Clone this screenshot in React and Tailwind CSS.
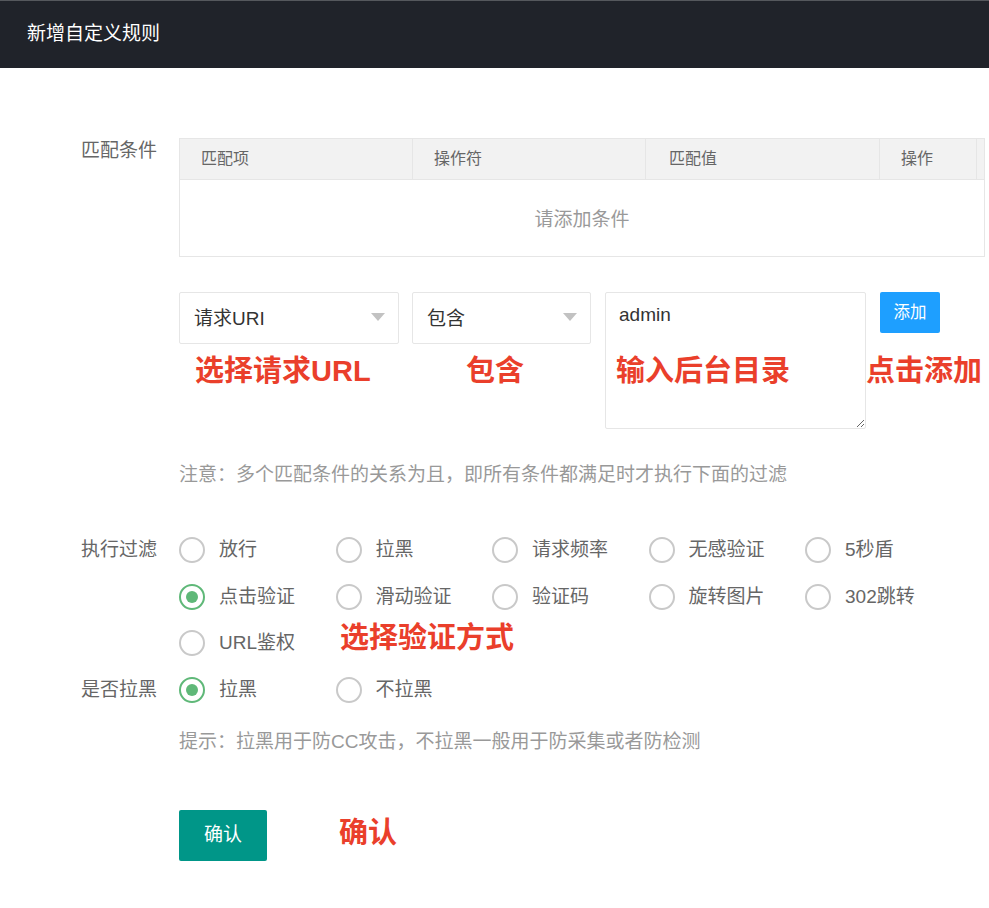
import React from 'react';

const font = { fontFamily: '"Liberation Sans", "Noto Sans CJK SC", sans-serif' };

const Radio = ({ label, checked }) => (
    <div className="flex items-center w-[156.5px] h-full">
        <span
            className={
                checked
                    ? 'w-[26px] h-[26px] rounded-full border-2 border-[#5fb878] flex items-center justify-center'
                    : 'w-[26px] h-[26px] rounded-full border-2 border-[#c9c9c9] flex items-center justify-center'
            }
        >
            {checked && <span className="w-[12px] h-[12px] rounded-full bg-[#5fb878]" />}
        </span>
        <span className="ml-[14px] text-[19px] text-[#666]">{label}</span>
    </div>
);

const Select = ({ value, width }) => (
    <div className={`${width} h-[52px] border border-[#e6e6e6] rounded-[2px] flex items-center justify-between pl-[14px] pr-[13px] bg-white`}>
        <span className="text-[19px] text-[#333] pt-[3px]">{value}</span>
        <span className="w-0 h-0 border-l-[7px] border-r-[7px] border-t-[8px] border-l-transparent border-r-transparent border-t-[#c2c2c2] -mt-[3px]" />
    </div>
);

const Note = ({ text }) => (
    <span className="absolute text-[29px] leading-[29px] font-bold text-[#ea3f2b] whitespace-nowrap">{text}</span>
);

const filters = [
    ['放行', '拉黑', '请求频率', '无感验证', '5秒盾'],
    ['点击验证', '滑动验证', '验证码', '旋转图片', '302跳转'],
    ['URL鉴权'],
];

const App = () => {
    return (
        <div className="relative w-full min-h-[908px] bg-white" style={font}>
            {/* header */}
            <div className="h-[68px] bg-[#20232a] border-t border-[#55585d] flex items-center pl-[27px]">
                <span className="text-[19px] text-white">新增自定义规则</span>
            </div>

            <div className="pt-[70px]">
                {/* match conditions */}
                <div className="flex">
                    <div className="w-[179px] pl-[81px] text-[19px] leading-[26px] text-[#666]">匹配条件</div>
                    <div className="w-[806px] border border-[#e6e6e6]">
                        <div className="flex h-[41px] bg-[#f2f2f2] border-b border-[#e6e6e6] text-[16px] text-[#666]">
                            <div className="w-[233px] pl-[21px] flex items-center border-r border-[#e6e6e6]">匹配项</div>
                            <div className="w-[233px] pl-[21px] flex items-center border-r border-[#e6e6e6]">操作符</div>
                            <div className="w-[234px] pl-[23px] flex items-center border-r border-[#e6e6e6]">匹配值</div>
                            <div className="w-[97px] pl-[21px] flex items-center border-r border-[#e6e6e6]">操作</div>
                            <div className="flex-1" />
                        </div>
                        <div className="h-[76px] pt-[5px] flex items-center justify-center text-[19px] text-[#999]">请添加条件</div>
                    </div>
                </div>

                <div className="flex pl-[179px] mt-[35px] items-start">
                    <Select value="请求URI" width="w-[220px]" />
                    <div className="ml-[13px]">
                        <Select value="包含" width="w-[179px]" />
                    </div>
                    <textarea
                        defaultValue="admin"
                        className="ml-[14px] w-[261px] h-[137px] border border-[#e6e6e6] rounded-[2px] px-[13px] py-[9px] text-[19px] leading-[26px] text-[#333] outline-none"
                        style={font}
                    />
                    <button className="ml-[14px] w-[60px] h-[41px] bg-[#1e9fff] text-white text-[16.5px] rounded-[2px]">添加</button>
                </div>

                <div className="pl-[179px] mt-[33px] text-[19px] leading-[26px] text-[#999]">
                    注意：多个匹配条件的关系为且，即所有条件都满足时才执行下面的过滤
                </div>

                {/* filter type */}
                <div className="flex mt-[39px]">
                    <div className="w-[179px] pl-[81px] text-[19px] leading-[46px] text-[#666]">执行过滤</div>
                    <div className="flex flex-col">
                        {filters.map((row, i) => (
                            <div key={i} className="flex h-[46.5px]">
                                {row.map(label => (
                                    <Radio key={label} label={label} checked={label === '点击验证'} />
                                ))}
                            </div>
                        ))}
                    </div>
                </div>

                <div className="flex">
                    <div className="w-[179px] pl-[81px] text-[19px] leading-[46px] text-[#666]">是否拉黑</div>
                    <div className="flex h-[46.5px]">
                        <Radio label="拉黑" checked />
                        <Radio label="不拉黑" />
                    </div>
                </div>

                <div className="pl-[179px] mt-[16px] text-[19px] leading-[26px] text-[#999]">
                    提示：拉黑用于防CC攻击，不拉黑一般用于防采集或者防检测
                </div>

                <div className="pl-[179px] mt-[55px]">
                    <button className="w-[88px] h-[51px] bg-[#009688] text-white text-[19px] rounded-[2px]">确认</button>
                </div>
            </div>

            {/* red annotations */}
            <div className="absolute left-[195px] top-[357px]"><Note text="选择请求URL" /></div>
            <div className="absolute left-[466px] top-[357px]"><Note text="包含" /></div>
            <div className="absolute left-[616px] top-[357px]"><Note text="输入后台目录" /></div>
            <div className="absolute left-[866px] top-[357px]"><Note text="点击添加" /></div>
            <div className="absolute left-[340px] top-[624px]"><Note text="选择验证方式" /></div>
            <div className="absolute left-[339px] top-[819px]"><Note text="确认" /></div>
        </div>
    );
};

export default App;
